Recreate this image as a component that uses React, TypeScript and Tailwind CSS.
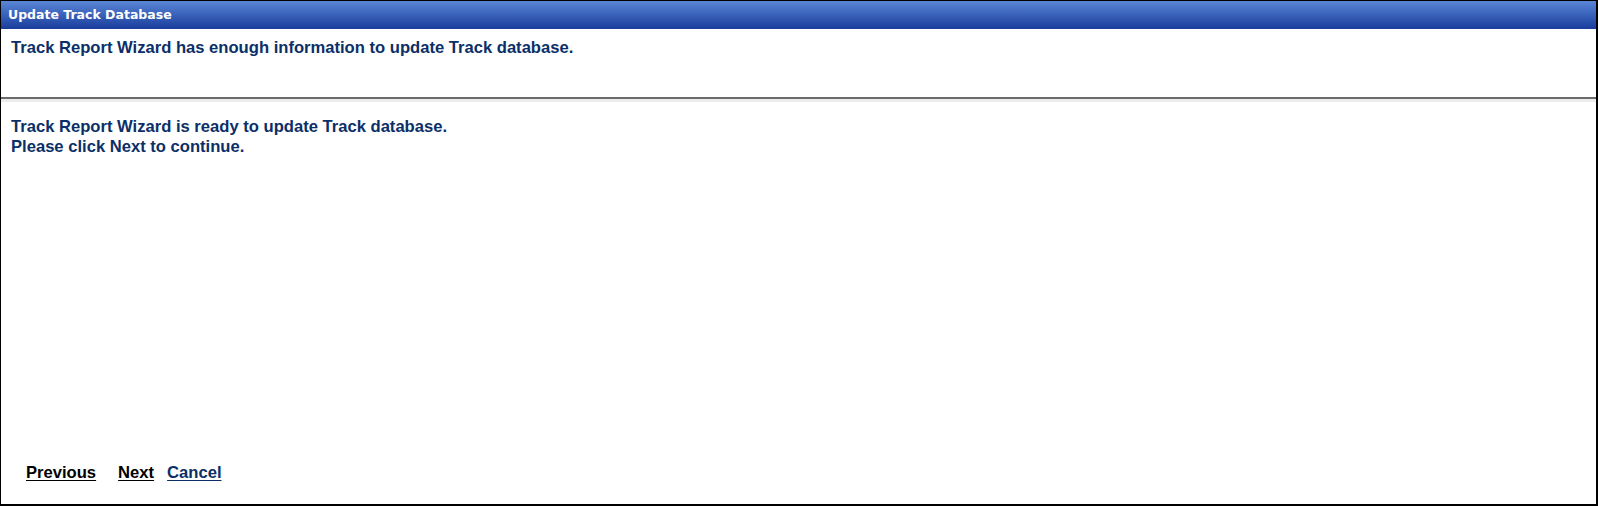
export default function App() {
  return (
    <div className="flex h-[506px] w-[1598px] flex-col border border-r-2 border-b-2 border-black bg-white font-['Liberation_Sans',Arial,sans-serif] text-[#0b2f68]">
      <div className="flex h-[28px] shrink-0 items-center bg-gradient-to-b from-[#5b86d6] to-[#1a3c9c] pl-[7px] font-['DejaVu_Sans',sans-serif] text-[12.5px] font-bold text-white">
        Update Track Database
      </div>
      <div className="h-[68px] shrink-0 px-[10px] pt-[9px] text-[16.6px] leading-[20px] font-bold">
        Track Report Wizard has enough information to update Track database.
      </div>
      <div className="h-[2px] shrink-0 bg-[#6b6b6b]" />
      <div className="h-[3px] shrink-0 bg-[#ececec]" />
      <div className="flex flex-1 flex-col px-[10px] pt-[15px] text-[16.6px] leading-[20px] font-bold">
        <p>Track Report Wizard is ready to update Track database.</p>
        <p>Please click Next to continue.</p>
        <div className="mt-auto mb-[21px] flex items-center pl-[15px]">
          <a className="text-black underline underline-offset-2">Previous</a>
          <a className="ml-[22px] text-black underline underline-offset-2">Next</a>
          <a className="ml-[13px] text-[#0b2f68] underline underline-offset-2">Cancel</a>
        </div>
      </div>
    </div>
  )
}
